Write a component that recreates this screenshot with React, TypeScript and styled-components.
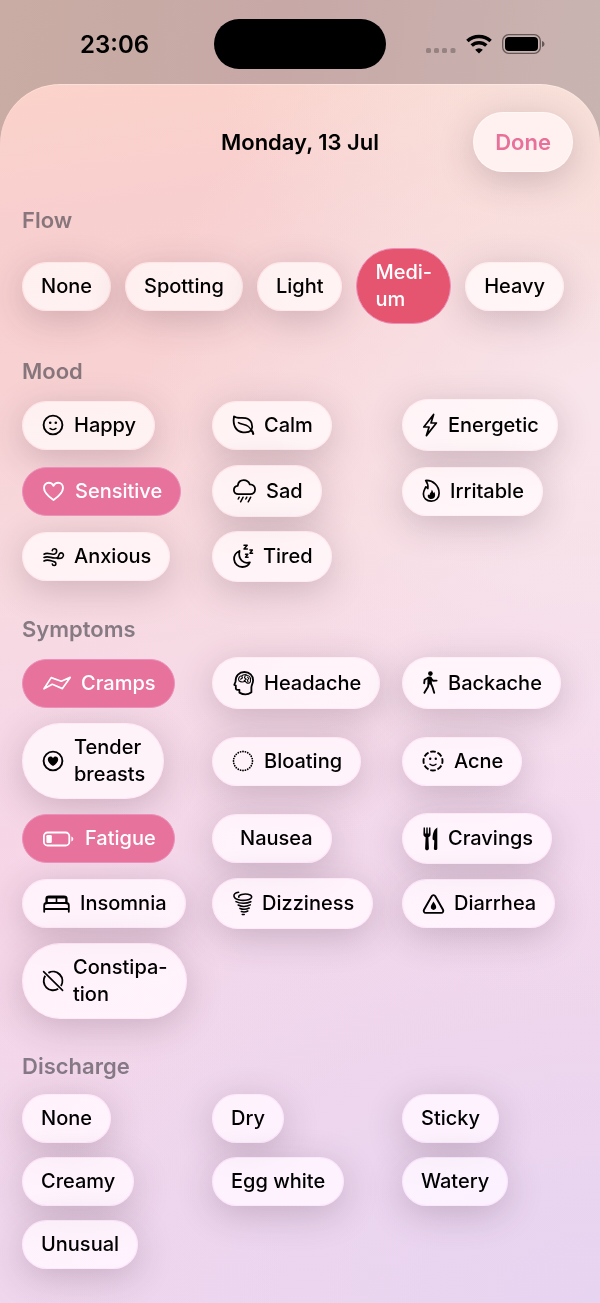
import React, { useState } from "react";
import styled, { createGlobalStyle, css } from "styled-components";

const GlobalStyle = createGlobalStyle`
  *, *::before, *::after { box-sizing: border-box; }
  body {
    margin: 0;
    background: #c8b0ae;
    font-family: Inter, "Liberation Sans", sans-serif;
    color: #000;
    -webkit-font-smoothing: antialiased;
  }
  button { font-family: inherit; cursor: pointer; }
`;

const Screen = styled.div`
  min-height: 100vh;
  display: flex;
  flex-direction: column;
  background: linear-gradient(100deg, #c9aca3 0%, #c7a8a7 35%, #c9b3b0 70%, #c9b6b5 100%);
`;

const StatusBar = styled.header`
  display: grid;
  grid-template-columns: 1fr 172px 1fr;
  align-items: center;
  height: 84px;
`;

const Clock = styled.time`
  padding: 5px 0 0 80px;
  font-size: 24px;
  line-height: 28px;
  font-weight: 600;
`;

const Island = styled.div`
  height: 50px;
  margin-top: 4px;
  border-radius: 25px;
  background: #000;
`;

const StatusIcons = styled.div`
  display: flex;
  align-items: center;
  gap: 10px;
  padding: 4px 0 0 40px;
`;

const Sheet = styled.main`
  flex: 1;
  padding: 28px 22px 35px;
  border-radius: 60px 60px 0 0;
  box-shadow: inset 0 1px 0 rgba(255, 255, 255, 0.3);
  background:
    radial-gradient(ellipse 380px 260px at 100% 0%, rgba(249, 227, 219, 0.95), rgba(249, 227, 219, 0) 100%),
    radial-gradient(ellipse 460px 420px at 100% 26%, rgba(248, 230, 236, 0.95), rgba(248, 230, 236, 0) 100%),
    radial-gradient(ellipse 300px 300px at 100% 52%, rgba(244, 220, 241, 0.7), rgba(244, 220, 241, 0) 100%),
    radial-gradient(ellipse 260px 320px at 0% 66%, rgba(247, 212, 229, 0.7), rgba(247, 212, 229, 0) 100%),
    radial-gradient(ellipse 600px 420px at 100% 100%, rgba(231, 212, 241, 0.95), rgba(231, 212, 241, 0) 100%),
    linear-gradient(172deg, #fbd3ca 0%, #f8cfcf 11%, #f8d1d2 22%, #f7dadf 38%, #f6dae6 48%, #f2d8eb 62%, #efd6ed 100%);
`;

const SheetHeader = styled.div`
  display: grid;
  grid-template-columns: 1fr auto 1fr;
  align-items: center;
  padding: 0 5px;
  margin-bottom: 34px;
`;

const Title = styled.h1`
  grid-column: 2;
  margin: 0;
  font-size: 22px;
  line-height: 28px;
  font-weight: 600;
`;

const glass = css`
  border: 1px solid rgba(255, 255, 255, 0.5);
  background: rgba(255, 255, 255, 0.72);
  background-clip: padding-box;
  backdrop-filter: saturate(1.7);
  box-shadow: 0 8px 36px rgba(76, 44, 66, 0.24);
`;

const DoneButton = styled.button`
  ${glass}
  justify-self: end;
  height: 60px;
  padding: 0 21px;
  border-radius: 30px;
  background: #fff1ef;
  color: #e8719c;
  font-size: 22px;
  line-height: 28px;
  font-weight: 600;
`;

const Section = styled.section`
  & + & { margin-top: 33px; }
`;

const SectionTitle = styled.h2`
  margin: 0 0 14px;
  font-size: 22px;
  line-height: 28px;
  font-weight: 600;
  color: rgba(60, 58, 67, 0.6);
`;

const ChipRow = styled.div`
  display: flex;
  align-items: center;
  gap: 14px;
`;

const ChipGrid = styled.div`
  display: grid;
  grid-template-columns: repeat(3, minmax(0, 1fr));
  align-items: center;
  justify-items: start;
  gap: 14px;
`;

type Tone = "pink" | "red";
const tones: Record<Tone, string> = { pink: "#e7729b", red: "#e5556f" };

const ChipButton = styled.button<{ $tone: Tone; $on: boolean }>`
  ${glass}
  display: inline-flex;
  align-items: center;
  gap: 9px;
  padding: 10px 18px;
  border-radius: 38px;
  color: #000;
  font-size: 20px;
  line-height: 27px;
  font-weight: 500;
  text-align: left;
  white-space: pre;
  ${({ $on, $tone }) =>
    $on &&
    css`
      z-index: 1;
      color: #fff;
      background: ${tones[$tone]};
      border-color: #eb8fbb;
      box-shadow: none;
      backdrop-filter: none;
    `}
`;

const Glyph = styled.svg`
  display: block;
  flex: none;
  fill: none;
  stroke: currentColor;
  stroke-width: 1.9;
  stroke-linecap: round;
  stroke-linejoin: round;
  .solid { fill: currentColor; stroke: none; }
  .thin { stroke-width: 1.4; }
`;

type IconDef = { w: number; h: number; art: React.ReactNode };

const icons: Record<string, IconDef> = {
  happy: {
    w: 24, h: 24,
    art: (<>
      <circle cx="12" cy="12" r="9.4" />
      <circle className="solid" cx="9.2" cy="9.7" r="1.3" />
      <circle className="solid" cx="14.8" cy="9.7" r="1.3" />
      <path className="thin" d="M9 15.4 Q12 17.9 15 15.4" />
    </>),
  },
  calm: {
    w: 24, h: 24,
    art: (<>
      <path d="M3 3.4 C1.6 12 4.5 18.4 12 19.3 C15.5 19.7 18.5 19 20.2 17.4 C22.4 12.6 20.8 6.6 14.6 5.2 C10.5 4.4 5.8 6 3 3.4 Z" strokeWidth="1.8" />
      <path className="thin" d="M7.4 9.6 C10.2 11.8 14.2 10.6 17.4 13.6 C19.2 15.2 19.9 16.8 20.7 18.2" />
      <path d="M20.2 17.4 C21.4 18.2 22 18.9 22.2 20.8" strokeWidth="2.2" />
    </>),
  },
  energetic: {
    w: 18, h: 30,
    art: <path d="M12.6 4.4 L2.8 17 L8.1 17 L5.4 25.6 L15.4 13 L10 13 Z" strokeWidth="1.7" />,
  },
  heart: {
    w: 25, h: 24,
    art: <path d="M12.5 21 C8 17.8 3 13.8 3 8.9 C3 5.8 5.2 3.8 7.8 3.8 C9.9 3.8 11.6 4.9 12.5 6.8 C13.4 4.9 15.1 3.8 17.2 3.8 C19.8 3.8 22 5.8 22 8.9 C22 13.8 17 17.8 12.5 21 Z" />,
  },
  sad: {
    w: 26, h: 30,
    art: (<>
      <path d="M7.5 18.2 C4.6 18.2 2.9 16.4 2.9 14 C2.9 11.8 4.5 10.1 6.7 9.8 C7.2 6.4 9.8 4.2 12.8 4.2 C15.5 4.2 17.7 5.8 18.8 8.3 C21.8 8.2 24.1 10.4 24.1 13.3 C24.1 16.2 22 18.2 19.3 18.2 Z" strokeWidth="1.8" />
      <path d="M8.2 21.2 L7.2 23 M12.1 21.2 L9.6 25.8 M15.8 21.2 L14.8 23 M19.7 21.2 L17.2 25.8" strokeWidth="1.5" />
    </>),
  },
  irritable: {
    w: 20, h: 24,
    art: (<>
      <path d="M4.7 1.5 C12 1 18.1 6.6 18.1 14.2 C18.1 19 14.9 22.2 10.3 22.2 C5.6 22.2 2.4 19.2 2.4 14.9 C2.4 11.8 4 9.9 4.8 7.8 C5.8 8 6.4 8.7 6.9 9.5 C7.3 6.6 6.6 4.1 4.7 1.5 Z" strokeWidth="1.7" />
      <path className="solid" d="M10.7 10.8 C12 12 11.9 13 12.5 14 C13 13.8 13.2 13.3 13.2 12.8 C15 15.8 14.4 20 10.3 20 C7.2 20 6 17.4 7.2 15.2 C7.5 15.9 8 16.2 8.5 16.1 C8.6 13.8 10.9 13.3 10.7 10.8 Z" />
    </>),
  },
  anxious: {
    w: 24, h: 24,
    art: (<g strokeWidth="1.6">
      <path d="M3 9.2 C7 6.8 10 10.2 13.6 9 C16.6 7.8 16.2 3.6 13.3 3.8 C12 3.9 11.3 4.7 11.2 5.7" />
      <path d="M3 12.5 C7.6 10.3 11 14 16 12.7 C18.4 12.2 17 8.4 19.8 7.9 C22.4 7.7 23.5 11 21.3 12.6 C19.8 13.8 18 13.3 16.4 13.4" />
      <path d="M3 16 C7 13.6 9.8 16.2 13 16.6 C15.8 17.3 15.4 20.6 13 20.5 C12 20.5 11.4 19.9 11.3 19" />
    </g>),
  },
  tired: {
    w: 23, h: 29,
    art: (<>
      <path d="M8.5 9 C4.6 10.8 2.9 14.2 3.1 17.4 C3.5 22 7 25 11.4 25 C15.2 25 18 22.8 18.9 20.3 C12.8 22.4 6.8 17.5 8.5 9 Z" strokeWidth="1.8" />
      <path d="M13 3.2 H16.2 L13 7 H16.4" strokeWidth="1.5" />
      <path d="M18.9 8 H21.4 L18.9 11.2 H21.6 M14.5 12.3 H16.9 L14.5 15.2 H17.1" strokeWidth="1.4" />
    </>),
  },
  cramps: {
    w: 31, h: 24,
    art: <path d="M3 17.8 L10.2 6.6 L20.3 10.2 L29.2 6.4 L21.4 17.6 L11.3 13.3 Z" strokeWidth="1.7" />,
  },
  headache: {
    w: 24, h: 30,
    art: (<>
      <path d="M8.4 24.6 V21.8 H6.5 C5.2 21.8 4.8 21 4.8 19.9 V17.5 L3.3 16.9 C3.2 16.2 4.4 14.7 4.6 13.4 C4.4 7.6 8.2 4 13.4 4 C18.6 4 22.1 7.5 22.1 12.3 C22.1 15.2 20.4 17.3 20.4 19.4 V24.3 C17 26.8 12 26.6 8.4 24.6 Z" strokeWidth="1.8" />
      <path d="M8 12.8 C6.6 10.3 8.8 7.8 10.8 7.8 C12.4 6.3 15 6.4 16.2 7.5 C18.5 7.6 20 10 19.4 12 C20 14 18.6 15.4 17 15.2 C15.6 15.3 15 14 14.2 13.2 C12.2 14.1 9.6 14.1 8 12.8 M10.9 8.2 L11.4 10 L9.6 11.2 M14.2 7.8 L13.5 9.8 L15.2 11.2 L13.2 12.6 M16.6 9.2 L17.8 10.5 L16.5 12 L17 14" strokeWidth="1.1" />
    </>),
  },
  backache: {
    w: 18, h: 30,
    art: (<>
      <circle className="solid" cx="9.4" cy="5.6" r="2.3" />
      <path className="solid" d="M6.3 9 C8 8.3 10.4 8.2 11 10 L10.7 16.4 L6.6 16.2 Z" />
      <path d="M7.1 9.8 L3.6 11.8 L3.2 15.2 M10.4 10.8 L12.2 12.8 L15.6 12.6 M7.7 15 L7 18.8 L3.4 24.8 M9.7 15 L11.4 18.8 L13.2 24.8" strokeWidth="1.9" />
    </>),
  },
  tender: {
    w: 24, h: 24,
    art: (<>
      <circle cx="12" cy="12" r="9.4" />
      <path className="solid" d="M12 17 C9.2 15.2 6.8 12.9 6.8 10.4 C6.8 8.7 8 7.5 9.5 7.5 C10.6 7.5 11.5 8.1 12 9 C12.5 8.1 13.4 7.5 14.5 7.5 C16 7.5 17.2 8.7 17.2 10.4 C17.2 12.9 14.8 15.2 12 17 Z" />
    </>),
  },
  bloating: {
    w: 24, h: 24,
    art: <circle cx="12" cy="12" r="9.5" strokeWidth="1.8" pathLength="120" strokeDasharray="0 5" />,
  },
  acne: {
    w: 24, h: 24,
    art: (<>
      <circle cx="12" cy="12" r="9.5" strokeWidth="1.9" strokeLinecap="butt" pathLength="96" strokeDasharray="9 3" strokeDashoffset="4.5" />
      <circle className="solid" cx="9.2" cy="9.8" r="1.2" />
      <circle className="solid" cx="14.8" cy="9.8" r="1.2" />
      <path className="thin" d="M9 15.2 Q12 17.7 15 15.2" />
    </>),
  },
  fatigue: {
    w: 35, h: 24,
    art: (<>
      <rect x="2.9" y="5.5" width="25.4" height="13" rx="3.6" strokeWidth="1.8" />
      <rect className="solid" x="5.4" y="8" width="5.4" height="8" rx="1.2" />
      <path className="solid" d="M30.4 9.5 C32.9 10.2 32.9 13.8 30.4 14.5 Z" />
    </>),
  },
  nausea: { w: 0, h: 24, art: null },
  cravings: {
    w: 18, h: 29,
    art: (<>
      <path className="solid" d="M2.6 3.6 H4 L4.2 9.6 H5.2 L5.3 3.6 H6.7 L6.8 9.6 H7.8 L8 3.6 H9.4 L9.6 10.3 C9.6 12 8.5 12.9 7.4 13.3 L7.9 24.4 C7.9 26.8 4.1 26.8 4.1 24.4 L4.6 13.3 C3.5 12.9 2.4 12 2.4 10.3 Z" />
      <path className="solid" d="M16.3 3.4 V24.6 C16.3 26.6 12.9 26.6 12.9 24.6 L13.3 16.5 L11.6 15.6 C11.4 10.4 12.6 5.4 16.3 3.4 Z" />
    </>),
  },
  insomnia: {
    w: 30, h: 24,
    art: (<>
      <path d="M3.2 19.8 V13.4 C3.2 11.8 4.3 11 5.8 11 H25.2 C26.8 11 27.8 11.8 27.8 13.4 V19.8 M3.2 17 H27.8" strokeWidth="1.8" />
      <path d="M5.6 11 V6.6 C5.6 5.2 6.6 4.6 8 4.6 H23 C24.4 4.6 25.4 5.2 25.4 6.6 V11" strokeWidth="2.4" />
      <path d="M7 5.8 H24 M15.5 6 V11" strokeWidth="1.6" />
    </>),
  },
  dizziness: {
    w: 22, h: 29,
    art: (<g strokeWidth="1.6">
      <path d="M7.6 3.3 C4 3.6 2.6 5.5 3 7.3 C3.7 10.6 10 12 16 11 C19 10.5 21 9.2 20.6 7.5 C20.1 5.2 14.5 4.4 10.8 5.5 C8.7 6.1 7.2 7.2 7.9 8.2" />
      <path d="M5 12.6 C9 14.8 15.6 14.8 19.8 12.7 M7.2 16 C10.4 17.7 15.5 17.7 19.2 15.9 M9 19.4 C11.8 20.6 15.2 20.5 18.2 19 M10.4 22.6 C12.6 23.3 14.8 23.1 16.8 22 M11.3 25.5 H13.2" />
    </g>),
  },
  diarrhea: {
    w: 24, h: 24,
    art: (<>
      <path d="M10.7 4.2 C11.5 2.8 13.5 2.8 14.3 4.2 L22 17.7 C22.8 19.2 21.9 20.9 20.2 20.9 H4.8 C3.1 20.9 2.2 19.2 3 17.7 Z" />
      <path className="solid" d="M12.5 9.4 C13.7 11.7 15.2 13.2 15.2 15.1 C15.2 16.8 14 17.9 12.5 17.9 C11 17.9 9.8 16.8 9.8 15.1 C9.8 13.2 11.3 11.7 12.5 9.4 Z" />
    </>),
  },
  constipation: {
    w: 23, h: 24,
    art: (<>
      <path d="M7.4 3.8 A9.4 9.4 0 0 1 20 16.9 M17.2 19.8 A9.4 9.4 0 0 1 4.2 6.8" strokeWidth="1.9" strokeLinecap="butt" />
      <path d="M2.6 2.6 L21.6 21.4" strokeWidth="1.6" />
    </>),
  },
};

type Option = { label: string; icon?: string; on?: boolean; tone?: Tone };

const flow: Option[] = [
  { label: "None" },
  { label: "Spotting" },
  { label: "Light" },
  { label: "Medi-\num", on: true, tone: "red" },
  { label: "Heavy" },
];

const mood: Option[] = [
  { label: "Happy", icon: "happy" },
  { label: "Calm", icon: "calm" },
  { label: "Energetic", icon: "energetic" },
  { label: "Sensitive", icon: "heart", on: true },
  { label: "Sad", icon: "sad" },
  { label: "Irritable", icon: "irritable" },
  { label: "Anxious", icon: "anxious" },
  { label: "Tired", icon: "tired" },
];

const symptoms: Option[] = [
  { label: "Cramps", icon: "cramps", on: true },
  { label: "Headache", icon: "headache" },
  { label: "Backache", icon: "backache" },
  { label: "Tender\nbreasts", icon: "tender" },
  { label: "Bloating", icon: "bloating" },
  { label: "Acne", icon: "acne" },
  { label: "Fatigue", icon: "fatigue", on: true },
  { label: "Nausea", icon: "nausea" },
  { label: "Cravings", icon: "cravings" },
  { label: "Insomnia", icon: "insomnia" },
  { label: "Dizziness", icon: "dizziness" },
  { label: "Diarrhea", icon: "diarrhea" },
  { label: "Constipa-\ntion", icon: "constipation" },
];

const discharge: Option[] = [
  { label: "None" },
  { label: "Dry" },
  { label: "Sticky" },
  { label: "Creamy" },
  { label: "Egg white" },
  { label: "Watery" },
  { label: "Unusual" },
];

function Icon({ name }: { name: string }) {
  const { w, h, art } = icons[name];
  return (
    <Glyph width={w} height={h} viewBox={`0 0 ${w || 1} ${h}`} aria-hidden="true">
      {art}
    </Glyph>
  );
}

function Chip({ label, icon, on = false, tone = "pink" }: Option) {
  const [pressed, setPressed] = useState(on);
  return (
    <ChipButton type="button" $on={pressed} $tone={tone} aria-pressed={pressed} onClick={() => setPressed(!pressed)}>
      {icon && <Icon name={icon} />}
      <span>{label}</span>
    </ChipButton>
  );
}

function Group({ title, options, row }: { title: string; options: Option[]; row?: boolean }) {
  const Chips = row ? ChipRow : ChipGrid;
  return (
    <Section>
      <SectionTitle>{title}</SectionTitle>
      <Chips>
        {options.map((o) => (
          <Chip key={o.label} {...o} />
        ))}
      </Chips>
    </Section>
  );
}

export default function App() {
  return (
    <>
      <GlobalStyle />
      <Screen>
        <StatusBar>
          <Clock>23:06</Clock>
          <Island />
          <StatusIcons>
            <svg width="30" height="20" viewBox="0 0 30 20" fill="#000" fillOpacity="0.25" aria-hidden="true">
              <rect x="0" y="14" width="5" height="5" rx="1.6" />
              <rect x="8" y="14" width="5" height="5" rx="1.6" />
              <rect x="16" y="14" width="5" height="5" rx="1.6" />
              <rect x="24.5" y="14" width="5" height="5" rx="1.6" />
            </svg>
            <svg width="26" height="20" viewBox="0 0 26 20" fill="none" stroke="#000" strokeWidth="3.5" aria-hidden="true">
              <path d="M1.4 7 A17 17 0 0 1 24.6 7" />
              <path d="M5.7 11.6 A10.6 10.6 0 0 1 20.3 11.6" />
              <path d="M13 19.6 L9.2 15.8 A5.3 5.3 0 0 1 16.8 15.8 Z" fill="#000" stroke="none" />
            </svg>
            <svg width="43" height="20" viewBox="0 0 43 20" aria-hidden="true">
              <rect x="0.7" y="0.7" width="37.6" height="18.6" rx="6" fill="none" stroke="#000" strokeOpacity="0.5" strokeWidth="1.3" />
              <rect x="3" y="3" width="33" height="14" rx="4" />
              <path d="M40 7 C43.3 7.8 43.3 12.2 40 13 Z" fillOpacity="0.5" />
            </svg>
          </StatusIcons>
        </StatusBar>
        <Sheet>
          <SheetHeader>
            <Title>Monday, 13 Jul</Title>
            <DoneButton type="button">Done</DoneButton>
          </SheetHeader>
          <Group title="Flow" options={flow} row />
          <Group title="Mood" options={mood} />
          <Group title="Symptoms" options={symptoms} />
          <Group title="Discharge" options={discharge} />
        </Sheet>
      </Screen>
    </>
  );
}
